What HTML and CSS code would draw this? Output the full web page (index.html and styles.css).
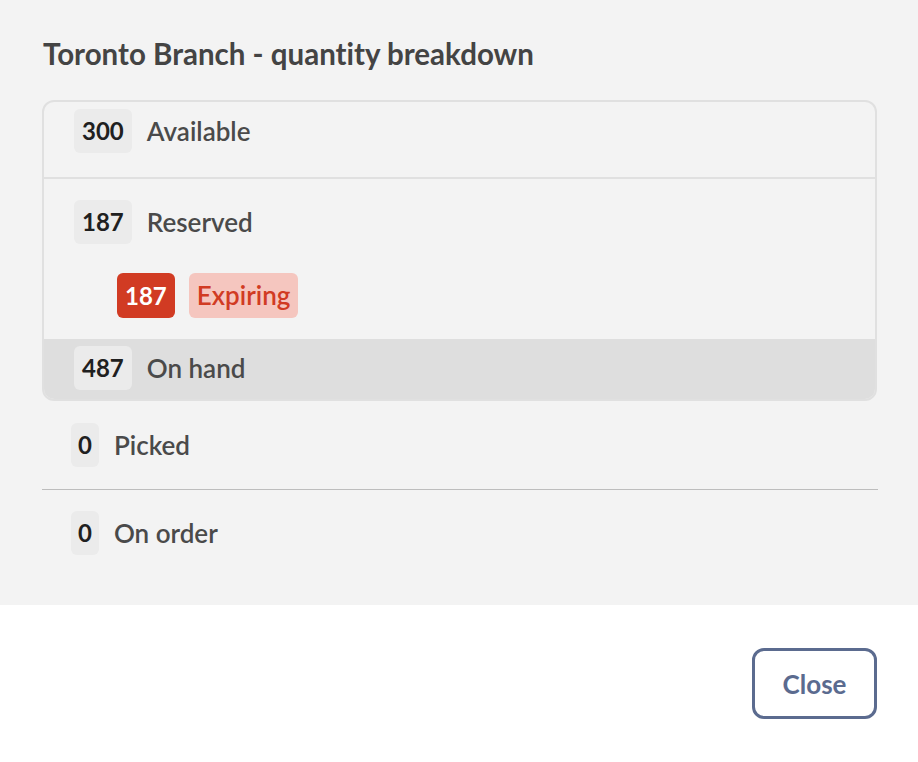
FILE: index.html
```html
<!DOCTYPE html>
<html>
<head>
<meta charset="utf-8">
<link rel="stylesheet" href="styles.css">
</head>
<body>
<div class="panel">
  <h1 class="title">Toronto Branch - quantity breakdown</h1>
  <div class="box">
    <div class="row row-first">
      <span class="qty">300</span><span class="label">Available</span>
    </div>
    <div class="section">
      <div class="row-plain">
        <span class="qty">187</span><span class="label">Reserved</span>
      </div>
      <div class="row-plain sub">
        <span class="qty qty-red">187</span><span class="tag-red">Expiring</span>
      </div>
    </div>
    <div class="row row-total">
      <span class="qty">487</span><span class="label">On hand</span>
    </div>
  </div>
  <div class="outer">
    <div class="outer-row line">
      <span class="qty">0</span><span class="label">Picked</span>
    </div>
    <div class="outer-row">
      <span class="qty">0</span><span class="label">On order</span>
    </div>
  </div>
</div>
<div class="footer">
  <button class="btn">Close</button>
</div>
</body>
</html>
```
FILE: styles.css
```css
html, body {
  margin: 0;
  padding: 0;
  background: #ffffff;
  font-family: Lato, "Open Sans", sans-serif;
  font-variant-ligatures: none;
}
.panel {
  background: #f3f3f3;
  height: 605px;
  box-sizing: border-box;
  padding: 36px 41px 0 42px;
}
.title {
  margin: 0 0 30px 1px;
  font-size: 29.5px;
  line-height: 35px;
  font-weight: 700;
  color: #444444;
}
.box {
  border: 2px solid #e0e0e0;
  border-radius: 12px;
  overflow: hidden;
  margin-top: -1px;
}
.row, .row-plain, .outer-row {
  display: flex;
  align-items: center;
  gap: 15px;
}
.row {
  padding: 7px 30px;
}
.row-first {
  padding-bottom: 24px;
  border-bottom: 2px solid #e0e0e0;
}
.section {
  padding: 21px 30px;
  display: flex;
  flex-direction: column;
  gap: 29px;
}
.sub {
  padding-left: 43px;
  gap: 14px;
}
.row-total {
  background: #dedede;
  padding-bottom: 9px;
}
.qty {
  display: inline-block;
  height: 44px;
  line-height: 44px;
  padding: 0 8px;
  border-radius: 6px;
  background: #ebebeb;
  font-size: 24px;
  font-weight: 700;
  color: #202020;
}
.qty-red {
  background: #d13b23;
  color: #ffffff;
  height: 45px;
  line-height: 45px;
}
.tag-red {
  display: inline-block;
  height: 45px;
  line-height: 45px;
  padding: 0 8px;
  border-radius: 6px;
  background: #f5c6bf;
  color: #d13b23;
  font-size: 26px;
  font-weight: 600;
}
.label {
  font-size: 26px;
  font-weight: 600;
  color: #4a4a4a;
}
.outer {
  padding-top: 22px;
}
.outer-row {
  padding: 0 29px;
}
.outer-row.line {
  padding-bottom: 22px;
  border-bottom: 1px solid #bdbdbd;
  margin-bottom: 21px;
  margin-right: -1px;
  padding-left: 29px;
}
.outer-row .qty {
  padding: 0 7px;
}
.footer {
  display: flex;
  justify-content: flex-end;
  padding: 43px 41px 0 0;
}
.btn {
  width: 125px;
  height: 71px;
  box-sizing: border-box;
  border: 3px solid #5b6b8f;
  border-radius: 12px;
  background: #ffffff;
  color: #5b6b8f;
  font-family: Lato, "Open Sans", sans-serif;
  font-size: 26px;
  font-weight: 700;
}
```
